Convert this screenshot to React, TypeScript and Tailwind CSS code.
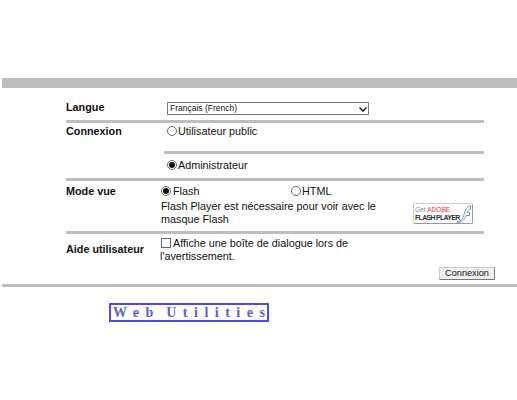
const Radio = ({ checked }: { checked?: boolean }) => (
  <span className="w-[10px] h-[10px] rounded-full border border-[#666] bg-white flex items-center justify-center shrink-0">
    {checked && <span className="w-[6px] h-[6px] rounded-full bg-[#111]"></span>}
  </span>
);

const Separator = () => <div className="h-[3px] bg-[#bebebe]"></div>;

const FlashBadge = () => (
  <div className="w-[60px] h-[21px] bg-white border border-[#ccc] border-b-[#999] border-r-[#999] rounded-[2px] relative overflow-hidden">
    <div className="absolute left-[1px] top-[2px] text-[6.5px] leading-[8px] whitespace-nowrap text-[#888] italic">
      Get <span className="text-[#e8333a] not-italic">ADOBE</span>
    </div>
    <div className="absolute left-[1px] top-[10px] text-[7px] font-bold leading-[8px] whitespace-nowrap text-[#333] tracking-[-0.7px]">
      FLASH PLAYER
    </div>
    <svg className="absolute right-0 top-0" width="16" height="19" viewBox="0 0 16 19" fill="none">
      <path
        d="M1 17.500c4.500 0 6-3 7-7s2.500-8 6.500-9v3.500c-2 .5-3 2-3.500 3.500h2.500v3h-3.500C8.500 16 6 18.500 1 18.500Z"
        stroke="#5f8fb5"
        strokeWidth="0.9"
      />
    </svg>
  </div>
);

export default function App() {
  return (
    <div className="w-[517px] h-[400px] bg-white pt-[78px] pl-[2px] text-[10.8px] leading-[13px] text-[#111] font-['Liberation_Sans',Arial,sans-serif] overflow-hidden">
      <div className="h-[10px] bg-[#bebebe]"></div>

      <div className="ml-[64px] w-[418px] mt-[13px]">
        {/* Langue */}
        <div className="flex h-[19px]">
          <div className="w-[101px] font-bold">Langue</div>
          <select
            defaultValue="fr"
            className="w-[202px] h-[13px] mt-[1px] border border-[#767676] bg-white text-[8.5px] leading-[11px] pl-[2px] appearance-none"
          >
            <option value="fr">Français (French)</option>
          </select>
          <svg className="-ml-[10px] mt-[6px] relative" width="8" height="5" viewBox="0 0 8 5" fill="none">
            <path d="M.5.5l3.500 3.500 3.500-3.500" stroke="#222" strokeWidth="1.500" />
          </svg>
        </div>
        <Separator />

        {/* Connexion */}
        <div className="flex">
          <div className="w-[98px] font-bold pt-[2px]">Connexion</div>
          <div className="flex-1">
            <div className="h-[28px] pt-[2px] pl-[3px] flex gap-[1px] items-start">
              <span className="mt-[1px]"><Radio /></span>
              <span>Utilisateur public</span>
            </div>
            <Separator />
            <div className="h-[24px] pt-[5px] pl-[3px] flex gap-[1px] items-start">
              <span className="mt-[1px]"><Radio checked /></span>
              <span>Administrateur</span>
            </div>
          </div>
        </div>
        <Separator />

        {/* Mode vue */}
        <div className="flex h-[50px]">
          <div className="w-[95px] font-bold pt-[4px]">Mode vue</div>
          <div className="flex-1">
            <div className="flex pt-[4px]">
              <div className="w-[130px] flex gap-[2px] items-start">
                <span className="mt-[1px]"><Radio checked /></span>
                <span>Flash</span>
              </div>
              <div className="flex gap-[1px] items-start">
                <span className="mt-[1px]"><Radio /></span>
                <span>HTML</span>
              </div>
            </div>
            <div className="flex">
              <p className="w-[252px] pt-[2px] pr-[25px]">
                Flash Player est nécessaire pour voir avec le masque Flash
              </p>
              <div className="pt-[5px]"><FlashBadge /></div>
            </div>
          </div>
        </div>
        <Separator />

        {/* Aide utilisateur */}
        <div className="flex h-[50px] w-[429px]">
          <div className="w-[94px] font-bold pt-[9px]">Aide utilisateur</div>
          <div className="w-[200px] pt-[3px]">
            <div className="flex gap-[2px] items-start">
              <span className="w-[10px] h-[10px] border border-[#666] bg-white mt-[1px] ml-[1px] shrink-0"></span>
              <span>Affiche une boîte de dialogue lors de</span>
            </div>
            <div>l'avertissement.</div>
          </div>
          <button className="ml-auto self-end mb-[4px] w-[56px] h-[13px] bg-[#f0f0f0] border border-[#ccc] border-r-[#777] border-b-[#777] text-[9.2px] leading-[11px] text-[#111]">
            Connexion
          </button>
        </div>
      </div>

      <div className="h-[3px] bg-[#bebebe]"></div>

      <div className="ml-[107px] mt-[16px] w-[160px] h-[19px] border-2 border-[#4a4af0] flex items-center pl-[2px] font-['Liberation_Serif',serif] font-bold text-[14px] text-[#5f5fc8] tracking-[6.5px] [word-spacing:-3.5px] whitespace-pre">
        Web Utilities
      </div>
    </div>
  );
}
